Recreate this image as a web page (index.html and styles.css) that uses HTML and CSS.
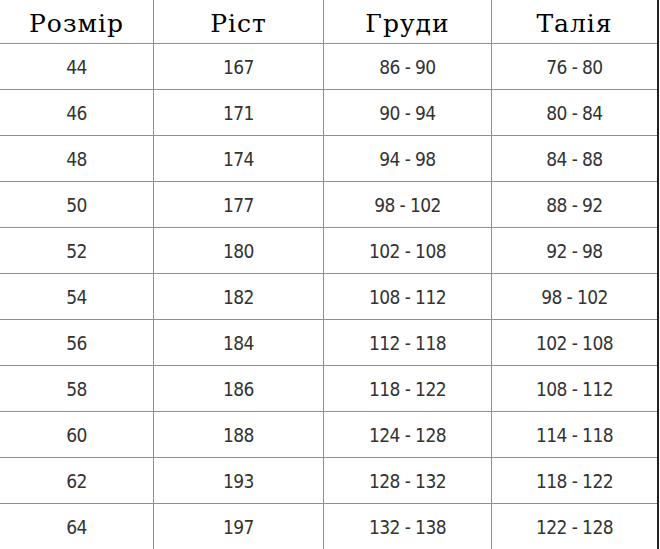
FILE: index.html
```
<!DOCTYPE html>
<html lang="uk">
<head>
<meta charset="utf-8">
<link rel="stylesheet" href="styles.css">
</head>
<body>
<div class="sheet">
  <div class="grid">
    <div class="cell head">Розмір</div><div class="cell head">Ріст</div><div class="cell head">Груди</div><div class="cell head">Талія</div>
    <div class="cell">44</div><div class="cell">167</div><div class="cell">86 - 90</div><div class="cell">76 - 80</div>
    <div class="cell">46</div><div class="cell">171</div><div class="cell">90 - 94</div><div class="cell">80 - 84</div>
    <div class="cell">48</div><div class="cell">174</div><div class="cell">94 - 98</div><div class="cell">84 - 88</div>
    <div class="cell">50</div><div class="cell">177</div><div class="cell">98 - 102</div><div class="cell">88 - 92</div>
    <div class="cell">52</div><div class="cell">180</div><div class="cell">102 - 108</div><div class="cell">92 - 98</div>
    <div class="cell">54</div><div class="cell">182</div><div class="cell">108 - 112</div><div class="cell">98 - 102</div>
    <div class="cell">56</div><div class="cell">184</div><div class="cell">112 - 118</div><div class="cell">102 - 108</div>
    <div class="cell">58</div><div class="cell">186</div><div class="cell">118 - 122</div><div class="cell">108 - 112</div>
    <div class="cell">60</div><div class="cell">188</div><div class="cell">124 - 128</div><div class="cell">114 - 118</div>
    <div class="cell">62</div><div class="cell">193</div><div class="cell">128 - 132</div><div class="cell">118 - 122</div>
    <div class="cell">64</div><div class="cell">197</div><div class="cell">132 - 138</div><div class="cell">122 - 128</div>
  </div>
</div>
</body>
</html>
```
FILE: styles.css
```
html, body {
  margin: 0;
  padding: 0;
  background: #fff;
}
.sheet {
  width: 660px;
  height: 549px;
  overflow: hidden;
}
.grid {
  display: grid;
  grid-template-columns: 153px 169px 167px 165px;
  grid-template-rows: 43px repeat(11, 45px);
  gap: 1px;
  background: #8f8f8f;
  width: 657px;
  border-right: 2px solid #222;
}
.cell {
  background: #fff;
  display: flex;
  align-items: center;
  justify-content: center;
  font-family: "DejaVu Sans Condensed", "Liberation Sans", sans-serif;
  font-size: 19px;
  letter-spacing: -0.6px;
  color: #333;
}
.head {
  font-family: "DejaVu Serif", "Liberation Serif", serif;
  font-size: 25px;
  color: #000;
  letter-spacing: 1px;
  padding-top: 3px;
}
```
